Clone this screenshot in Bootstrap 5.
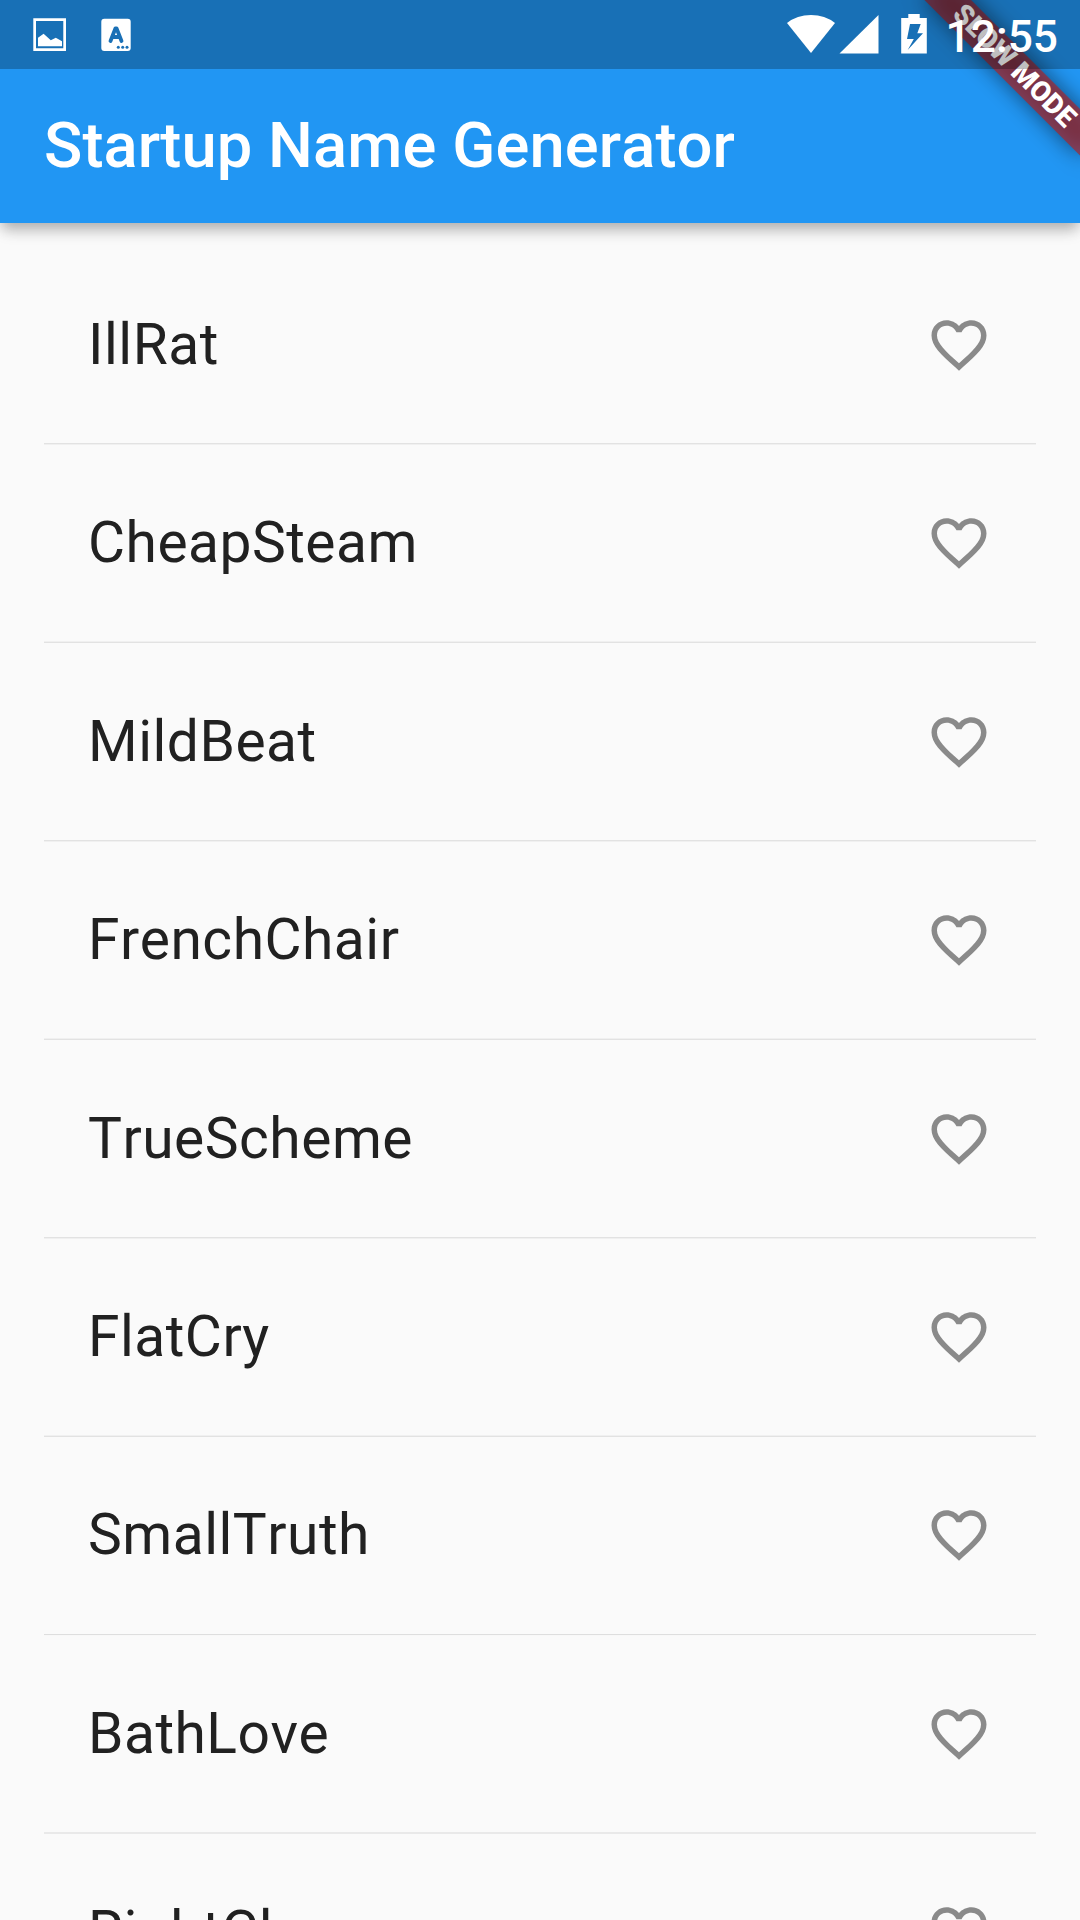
<!DOCTYPE html>
<html lang="en">
<head>
<meta charset="utf-8">
<meta name="viewport" content="width=device-width, initial-scale=1">
<title>Startup Name Generator</title>
<link href="https://cdn.jsdelivr.net/npm/bootstrap@5.3.0/dist/css/bootstrap.min.css" rel="stylesheet">
<style>
  body { font-family: Roboto, sans-serif; background: #fafafa; color: #212121; }
  .screen { width: 1080px; height: 1920px; }
  .status { height: 69px; background: rgba(0,0,0,.25); padding: 0 22px 0 0; z-index: 3; left: 0; top: 0; }
  .status svg { display: block; }
  .app-head { height: 223px; padding-top: 69px; background: #2196f3; z-index: 1; box-shadow: 0 11px 14px -3px rgba(0,0,0,.16), 0 5px 13px -1px rgba(0,0,0,.19); }
  .app-title { height: 154px; padding-left: 44px; font-size: 63.25px; font-weight: 500; line-height: 152px; letter-spacing: .1px; font-kerning: none; }
  .clock { width: 118px; font-size: 44.3px; font-weight: 500; line-height: 69px; padding-top: 5px; }
  .corner { right: 0; top: 0; width: 240px; height: 240px; z-index: 2; }
  .ribbon { left: 130px; top: 77px; width: 220px; height: 33px; transform-origin: 110px -77px; transform: rotate(45deg); font-size: 28px; font-weight: 900; line-height: 31px; }
  .ribbon::before { content: ""; position: absolute; inset: 0; background: rgba(0,0,0,.5); filter: blur(11px); }
  .ribbon span { position: absolute; inset: 0; background: rgba(183,28,28,.627); }
  .names { padding: 44.7px 44px 0; }
  .name-row { height: 154.43px; padding: 0 44px; font-size: 56.925px; line-height: 66px; letter-spacing: .5px; font-kerning: none; }
  .name-row svg { width: 66px; height: 66px; fill: #8a8a8a; }
  .rule { height: 44px; padding-top: 20.86px; }
  .rule::before { content: ""; display: block; height: 2px; background: linear-gradient(#e2e2e2 1px, #f0f0f0 1px); }
  .rule.low::before { background: linear-gradient(#f0f0f0 1px, #e2e2e2 1px); }
  .rule.thin::before { background: linear-gradient(#dedede 1px, #f8f8f8 1px); }
  .rule.even::before { background: #e9e9e9; }
</style>
</head>
<body>
<main class="screen position-relative overflow-hidden">
  <div class="status position-absolute w-100 d-flex align-items-center text-white">
    <svg width="150" height="69" viewBox="0 0 150 69" fill="#fff" class="me-auto">
      <path fill-rule="evenodd" d="M33.3 18.3h32.7v32.7H33.3zM36 21v27.3h27.3V21z"/>
      <path d="M38 46.3v-8.5l5.600-4 7.200 6.400 5-2.500 6.200 3.600v5z"/>
      <rect x="101.300" y="18.700" width="29.400" height="32.300" rx="3"/>
      <path d="M110.500 41l5-12.700h1l5 12.700M112.500 37h7" fill="none" stroke="#1a70b6" stroke-width="3.800" stroke-linecap="round" stroke-linejoin="round"/>
      <g fill="#1a70b6"><circle cx="118.300" cy="47.300" r="1.500"/><circle cx="122.700" cy="47.300" r="1.500"/><circle cx="127" cy="47.300" r="1.500"/></g>
    </svg>
    <svg width="160" height="69" viewBox="780 0 160 69" fill="#fff">
      <path d="M811 53L787 23Q797 15 811 15T835 23z"/>
      <path d="M878.500 15v38.500H839.500z"/>
      <path fill-rule="evenodd" d="M908.300 14h11.400v4h7.100v35.500h-25.600V18h7.100zM910 24L907 39h6.800L907.700 50 923 33.300h-5.700L920.700 24z"/>
    </svg>
    <span class="clock text-end">12:55</span>
  </div>
  <header class="app-head position-relative text-white">
    <h1 class="app-title m-0">Startup Name Generator</h1>
  </header>
  <div class="corner position-absolute overflow-hidden">
    <div class="ribbon position-absolute text-white text-center"><span>SLOW MODE</span></div>
  </div>
  <section class="names">
    <div class="name-row d-flex align-items-center justify-content-between"><span>IllRat</span><svg viewBox="0 0 24 24"><use href="#heart"/></svg></div><div class="rule"></div>
    <div class="name-row d-flex align-items-center justify-content-between"><span>CheapSteam</span><svg viewBox="0 0 24 24"><use href="#heart"/></svg></div><div class="rule low"></div>
    <div class="name-row d-flex align-items-center justify-content-between"><span>MildBeat</span><svg viewBox="0 0 24 24"><use href="#heart"/></svg></div><div class="rule"></div>
    <div class="name-row d-flex align-items-center justify-content-between"><span>FrenchChair</span><svg viewBox="0 0 24 24"><use href="#heart"/></svg></div><div class="rule low"></div>
    <div class="name-row d-flex align-items-center justify-content-between"><span>TrueScheme</span><svg viewBox="0 0 24 24"><use href="#heart"/></svg></div><div class="rule"></div>
    <div class="name-row d-flex align-items-center justify-content-between"><span>FlatCry</span><svg viewBox="0 0 24 24"><use href="#heart"/></svg></div><div class="rule low"></div>
    <div class="name-row d-flex align-items-center justify-content-between"><span>SmallTruth</span><svg viewBox="0 0 24 24"><use href="#heart"/></svg></div><div class="rule thin"></div>
    <div class="name-row d-flex align-items-center justify-content-between"><span>BathLove</span><svg viewBox="0 0 24 24"><use href="#heart"/></svg></div><div class="rule even"></div>
    <div class="name-row d-flex align-items-center justify-content-between"><span>RightCl</span><svg viewBox="0 0 24 24"><use href="#heart"/></svg></div>
  </section>
</main>
<svg width="0" height="0" class="position-absolute"><defs><path id="heart" d="M16.500 3c-1.740 0-3.410.81-4.500 2.090C10.910 3.810 9.240 3 7.500 3 4.420 3 2 5.420 2 8.500c0 3.780 3.400 6.860 8.550 11.540L12 21.350l1.450-1.320C18.600 15.360 22 12.280 22 8.500 22 5.420 19.580 3 16.500 3zm-4.400 15.550l-.1.1-.1-.1C7.140 14.240 4 11.390 4 8.500 4 6.500 5.500 5 7.500 5c1.540 0 3.040.99 3.570 2.360h1.870C13.460 5.990 14.960 5 16.500 5c2 0 3.500 1.500 3.500 3.500 0 2.890-3.140 5.740-7.900 10.050z"/></defs></svg>
<script src="https://cdn.jsdelivr.net/npm/bootstrap@5.3.0/dist/js/bootstrap.bundle.min.js"></script>
</body>
</html>
